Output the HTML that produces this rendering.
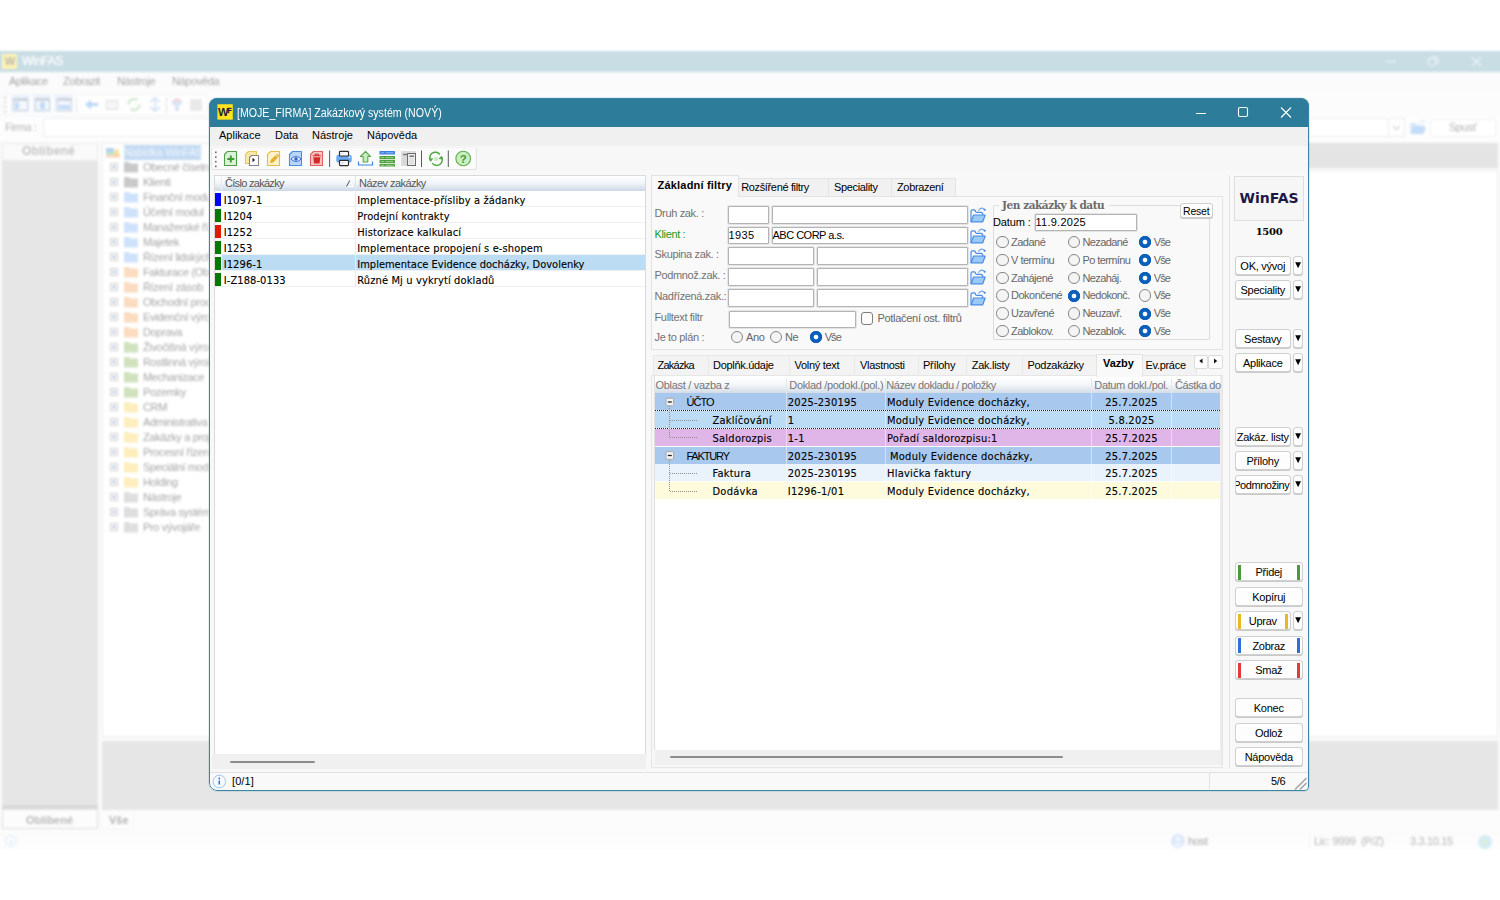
<!DOCTYPE html><html lang="cs"><head><meta charset="utf-8"><title>WinFAS</title><style>
*{box-sizing:border-box;margin:0;padding:0}
html,body{width:1500px;height:900px;overflow:hidden;background:#fff}
body{position:relative;font-family:"Liberation Sans","DejaVu Sans",sans-serif;font-size:11px;color:#000}
div,span.t,span.g,span.b,svg{position:absolute}
span.t{white-space:nowrap;line-height:13px;letter-spacing:-0.35px}
span.g{white-space:nowrap;line-height:13px;font-family:"DejaVu Sans Condensed","DejaVu Sans",sans-serif;font-size:11px;-webkit-text-stroke:.12px #000}
span.b{white-space:nowrap;line-height:13px;color:#a6a6a6;letter-spacing:-0.35px}
.inp{background:#fff;border:1px solid #b4b4b4;border-radius:1px;box-shadow:0 0 0 1px #e4e4e4}
.btn{background:#fdfdfd;border:1px solid #d0d0d0;border-radius:3px;text-align:center;line-height:16px;letter-spacing:-0.25px;box-shadow:0 1px 0 #c9c9c9}
.tab{background:#f0f0f0;border:1px solid #e3e3e3;border-bottom:none}
.rad{border:1px solid #8a8a8a;border-radius:50%;background:#f6f6f6;width:12px;height:12px}
.radon{border:4px solid #0f64c0;border-radius:50%;background:#fff;width:12px;height:12px}
</style></head><body>
<div id="bg" style="left:-30px;top:0;width:1560px;height:900px;filter:blur(.9px)"><div style="left:30px;top:0;width:1500px;height:900px">
<div style="left:-20px;top:51px;width:1540px;height:21px;background:#c9dde5"></div>
<div style="left:2px;top:54px;width:15px;height:15px;background:#fdf3b4;font-weight:bold;font-size:11px;color:#b9b7b0;text-align:center;line-height:15px;letter-spacing:-1px">W</div>
<span class="b" style="left:22px;top:55px;color:#fff;font-size:12px;letter-spacing:-.4px;text-shadow:0 0 .6px #fff">WinFAS</span>
<svg style="left:1380px;top:51px" width="120" height="21" viewBox="0 0 120 21"><g stroke="#eef5f8" stroke-width="1.2" fill="none"><path d="M6 10.5h10"/><rect x="48.5" y="7.5" width="7" height="7" rx="1.5"/><path d="M50.5 6h5.5a1.5 1.5 0 0 1 1.5 1.5V13"/><path d="M92 6l9 9M101 6l-9 9"/></g></svg>
<div style="left:-20px;top:72px;width:1540px;height:21px;background:#fbfbfb"></div>
<span class="b" style="left:9px;top:75px;">Aplikace</span>
<span class="b" style="left:63px;top:75px;">Zobrazit</span>
<span class="b" style="left:117px;top:75px;">Nástroje</span>
<span class="b" style="left:172px;top:75px;">Nápověda</span>
<div style="left:-20px;top:93px;width:1540px;height:24px;background:#fcfcfc"></div>
<div style="left:2px;top:94px;width:206px;height:22px;background:#fefefe;border:1px solid #f3f3f3;border-radius:3px"></div>
<svg style="left:0;top:93px" width="210" height="24" viewBox="0 0 210 24"><g fill="#b9b9b9"><circle cx="5.5" cy="4.500" r=".9"/><circle cx="5.5" cy="9.200" r=".9"/><circle cx="5.5" cy="13.900" r=".9"/><circle cx="5.500" cy="18.600" r=".9"/></g><g fill="#edf4fd"><rect x="10.500" y="1.500" width="19" height="18"/><rect x="32.500" y="1.500" width="18.500" height="18"/><rect x="54" y="1.500" width="18.500" height="18"/></g><g fill="#f4f8fd" stroke="#c6cfde" stroke-width="1"><rect x="13.5" y="5.5" width="14" height="12"/><rect x="35.5" y="5.5" width="14" height="12"/><rect x="57.500" y="5.500" width="14" height="12"/></g><g fill="#c3dbf7"><rect x="15" y="9" width="4" height="7"/><rect x="40" y="9" width="5" height="7"/><rect x="59" y="12" width="11" height="4"/></g><g fill="#cdd3de"><rect x="13" y="5" width="15" height="3"/><rect x="35" y="5" width="15" height="3"/><rect x="57" y="5" width="15" height="3"/></g><path d="M76.500 4v16" stroke="#e3e3e3"/><path d="M85 11.500l6-5v3.500h7v3h-7v3.500z" fill="#bcd7f5"/><rect x="106.500" y="7.500" width="11" height="9" fill="#f6f6f6" stroke="#e0e0e0"/><circle cx="134" cy="11.500" r="5.500" fill="none" stroke="#cfe6cb" stroke-width="2" stroke-dasharray="12 5"/><path d="M155 5v13M150 9l5-4 5 4M150 14l5 4 5-4" stroke="#cfe0f6" stroke-width="1.6" fill="none"/><path d="M166.500 4v16" stroke="#e3e3e3"/><path d="M172 8h10v4h-10zM175 12v6h4v-6" fill="#d9e4f4"/><path d="M172 8l5-3 5 3" fill="#f3cfd0"/><rect x="190" y="6" width="12" height="12" fill="#e9e9e9"/></svg>
<div style="left:-20px;top:117px;width:1540px;height:25px;background:#fdfdfd"></div>
<span class="b" style="left:5px;top:121px;color:#b6b6b6">Firma :</span>
<div style="left:43px;top:118px;width:1362px;height:19px;background:#fff;border:1px solid #ececec"></div>
<div style="left:1388px;top:118px;width:17px;height:19px;border:1px solid #ececec"></div>
<svg style="left:1388px;top:118px" width="17" height="19"><path d="M5 8l3.500 3.500L12 8" stroke="#d5d5d5" stroke-width="1.2" fill="none"/></svg>
<svg style="left:1409px;top:119px" width="18" height="18" viewBox="0 0 18 18"><path d="M1.500 4h5l1.500 2h7v9h-13.500z" fill="#d3e5fa"/><path d="M1.500 15l2.500-7h13l-2.500 7z" fill="#c2dcf9"/><path d="M10 3.500c2-2 4-2 6 0" stroke="#c9dff8" fill="none"/></svg>
<div style="left:1430px;top:119px;width:66px;height:18px;background:#fff;border:1px solid #f0f0f0;border-radius:3px"></div>
<span class="b" style="left:1449px;top:121px;color:#b4b4b4">Spusť</span>
<div style="left:-20px;top:141px;width:1540px;height:669px;background:#fafafa"></div>
<div style="left:2px;top:143px;width:96px;height:667px;background:#e6e6e6"></div>
<div style="left:2px;top:805px;width:96px;height:4px;background:#d9d9d9"></div>
<div style="left:2px;top:143px;width:96px;height:18px;background:#fafafa;border:1px solid #ebebeb"></div>
<span class="b" style="left:22px;top:145px;font-weight:bold;font-size:12px;color:#c4c4c4;letter-spacing:.2px">Oblíbené</span>
<div style="left:102px;top:143px;width:1396px;height:25px;background:#e4e4e4"></div>
<div style="left:102px;top:143px;width:108px;height:594px;background:#fff;border:1px solid #ededed;border-right:none"></div>
<div style="left:1300px;top:170px;width:198px;height:567px;background:#fff;border:1px solid #ececec"></div>
<div style="left:102px;top:741px;width:1396px;height:69px;background:#e6e6e6"></div>
<div style="left:124px;top:145px;width:77px;height:15px;background:#c3daf3"></div>
<span class="b" style="left:124px;top:146px;color:#eef5fc">Nabídka WinFAS</span>
<svg style="left:104px;top:145px" width="18" height="15"><rect x="2" y="3" width="8" height="4" fill="#b4d2ec"/><rect x="2" y="7" width="9" height="3" fill="#bfe3cc"/><path d="M9 11l4-9 3 9z" fill="#f8dd92"/><path d="M2 10.500h14v2H2z" fill="#f5cdb0"/></svg>
<svg style="left:104px;top:160px" width="40" height="380"><rect x="6.500" y="3.5" width="7" height="7" fill="#fff" stroke="#cdcdcd"/><path d="M8 7h4M10 5v4" stroke="#a9b6d0"/><path d="M20 2h5l1 1.500h8v9h-14z" fill="#c9c9c9"/><rect x="6.500" y="18.5" width="7" height="7" fill="#fff" stroke="#cdcdcd"/><path d="M8 22h4M10 20v4" stroke="#a9b6d0"/><path d="M20 17h5l1 1.500h8v9h-14z" fill="#c9c9c9"/><rect x="6.500" y="33.5" width="7" height="7" fill="#fff" stroke="#cdcdcd"/><path d="M8 37h4M10 35v4" stroke="#a9b6d0"/><path d="M20 32h5l1 1.500h8v9h-14z" fill="#cfe2fb"/><rect x="6.500" y="48.5" width="7" height="7" fill="#fff" stroke="#cdcdcd"/><path d="M8 52h4M10 50v4" stroke="#a9b6d0"/><path d="M20 47h5l1 1.500h8v9h-14z" fill="#cfe2fb"/><rect x="6.500" y="63.5" width="7" height="7" fill="#fff" stroke="#cdcdcd"/><path d="M8 67h4M10 65v4" stroke="#a9b6d0"/><path d="M20 62h5l1 1.500h8v9h-14z" fill="#cfe2fb"/><rect x="6.500" y="78.5" width="7" height="7" fill="#fff" stroke="#cdcdcd"/><path d="M8 82h4M10 80v4" stroke="#a9b6d0"/><path d="M20 77h5l1 1.500h8v9h-14z" fill="#cfe2fb"/><rect x="6.500" y="93.5" width="7" height="7" fill="#fff" stroke="#cdcdcd"/><path d="M8 97h4M10 95v4" stroke="#a9b6d0"/><path d="M20 92h5l1 1.500h8v9h-14z" fill="#cfe2fb"/><rect x="6.500" y="108.5" width="7" height="7" fill="#fff" stroke="#cdcdcd"/><path d="M8 112h4M10 110v4" stroke="#a9b6d0"/><path d="M20 107h5l1 1.500h8v9h-14z" fill="#fbdcc0"/><rect x="6.500" y="123.5" width="7" height="7" fill="#fff" stroke="#cdcdcd"/><path d="M8 127h4M10 125v4" stroke="#a9b6d0"/><path d="M20 122h5l1 1.500h8v9h-14z" fill="#fbdcc0"/><rect x="6.500" y="138.5" width="7" height="7" fill="#fff" stroke="#cdcdcd"/><path d="M8 142h4M10 140v4" stroke="#a9b6d0"/><path d="M20 137h5l1 1.500h8v9h-14z" fill="#fbdcc0"/><rect x="6.500" y="153.5" width="7" height="7" fill="#fff" stroke="#cdcdcd"/><path d="M8 157h4M10 155v4" stroke="#a9b6d0"/><path d="M20 152h5l1 1.500h8v9h-14z" fill="#fbdcc0"/><rect x="6.500" y="168.5" width="7" height="7" fill="#fff" stroke="#cdcdcd"/><path d="M8 172h4M10 170v4" stroke="#a9b6d0"/><path d="M20 167h5l1 1.500h8v9h-14z" fill="#fbdcc0"/><rect x="6.500" y="183.5" width="7" height="7" fill="#fff" stroke="#cdcdcd"/><path d="M8 187h4M10 185v4" stroke="#a9b6d0"/><path d="M20 182h5l1 1.500h8v9h-14z" fill="#cfe2bd"/><rect x="6.500" y="198.5" width="7" height="7" fill="#fff" stroke="#cdcdcd"/><path d="M8 202h4M10 200v4" stroke="#a9b6d0"/><path d="M20 197h5l1 1.500h8v9h-14z" fill="#cfe2bd"/><rect x="6.500" y="213.5" width="7" height="7" fill="#fff" stroke="#cdcdcd"/><path d="M8 217h4M10 215v4" stroke="#a9b6d0"/><path d="M20 212h5l1 1.500h8v9h-14z" fill="#cfe2bd"/><rect x="6.500" y="228.5" width="7" height="7" fill="#fff" stroke="#cdcdcd"/><path d="M8 232h4M10 230v4" stroke="#a9b6d0"/><path d="M20 227h5l1 1.500h8v9h-14z" fill="#cfe2bd"/><rect x="6.500" y="243.5" width="7" height="7" fill="#fff" stroke="#cdcdcd"/><path d="M8 247h4M10 245v4" stroke="#a9b6d0"/><path d="M20 242h5l1 1.500h8v9h-14z" fill="#fdeebc"/><rect x="6.500" y="258.5" width="7" height="7" fill="#fff" stroke="#cdcdcd"/><path d="M8 262h4M10 260v4" stroke="#a9b6d0"/><path d="M20 257h5l1 1.500h8v9h-14z" fill="#fdeebc"/><rect x="6.500" y="273.5" width="7" height="7" fill="#fff" stroke="#cdcdcd"/><path d="M8 277h4M10 275v4" stroke="#a9b6d0"/><path d="M20 272h5l1 1.500h8v9h-14z" fill="#fdeebc"/><rect x="6.500" y="288.5" width="7" height="7" fill="#fff" stroke="#cdcdcd"/><path d="M8 292h4M10 290v4" stroke="#a9b6d0"/><path d="M20 287h5l1 1.500h8v9h-14z" fill="#fdeebc"/><rect x="6.500" y="303.5" width="7" height="7" fill="#fff" stroke="#cdcdcd"/><path d="M8 307h4M10 305v4" stroke="#a9b6d0"/><path d="M20 302h5l1 1.500h8v9h-14z" fill="#fdeebc"/><rect x="6.500" y="318.5" width="7" height="7" fill="#fff" stroke="#cdcdcd"/><path d="M8 322h4M10 320v4" stroke="#a9b6d0"/><path d="M20 317h5l1 1.500h8v9h-14z" fill="#fdeebc"/><rect x="6.500" y="333.5" width="7" height="7" fill="#fff" stroke="#cdcdcd"/><path d="M8 337h4M10 335v4" stroke="#a9b6d0"/><path d="M20 332h5l1 1.500h8v9h-14z" fill="#dedede"/><rect x="6.500" y="348.5" width="7" height="7" fill="#fff" stroke="#cdcdcd"/><path d="M8 352h4M10 350v4" stroke="#a9b6d0"/><path d="M20 347h5l1 1.500h8v9h-14z" fill="#dedede"/><rect x="6.500" y="363.5" width="7" height="7" fill="#fff" stroke="#cdcdcd"/><path d="M8 367h4M10 365v4" stroke="#a9b6d0"/><path d="M20 362h5l1 1.500h8v9h-14z" fill="#dedede"/></svg>
<div style="left:143px;top:160px;width:66px;height:380px;overflow:hidden">
<span class="b" style="left:0px;top:1px;">Obecné číselníky</span>
<span class="b" style="left:0px;top:16px;">Klienti</span>
<span class="b" style="left:0px;top:31px;">Finanční moduly</span>
<span class="b" style="left:0px;top:46px;">Účetní modul</span>
<span class="b" style="left:0px;top:61px;">Manažerské řízení</span>
<span class="b" style="left:0px;top:76px;">Majetek</span>
<span class="b" style="left:0px;top:91px;">Řízení lidských zdrojů</span>
<span class="b" style="left:0px;top:106px;">Fakturace (Obchod)</span>
<span class="b" style="left:0px;top:121px;">Řízení zásob</span>
<span class="b" style="left:0px;top:136px;">Obchodní procesy</span>
<span class="b" style="left:0px;top:151px;">Evidenční výroba</span>
<span class="b" style="left:0px;top:166px;">Doprava</span>
<span class="b" style="left:0px;top:181px;">Živočišná výroba</span>
<span class="b" style="left:0px;top:196px;">Rostlinná výroba</span>
<span class="b" style="left:0px;top:211px;">Mechanizace</span>
<span class="b" style="left:0px;top:226px;">Pozemky</span>
<span class="b" style="left:0px;top:241px;">CRM</span>
<span class="b" style="left:0px;top:256px;">Administrativa</span>
<span class="b" style="left:0px;top:271px;">Zakázky a projekty</span>
<span class="b" style="left:0px;top:286px;">Procesní řízení</span>
<span class="b" style="left:0px;top:301px;">Speciální moduly</span>
<span class="b" style="left:0px;top:316px;">Holding</span>
<span class="b" style="left:0px;top:331px;">Nástroje</span>
<span class="b" style="left:0px;top:346px;">Správa systému</span>
<span class="b" style="left:0px;top:361px;">Pro vývojáře</span>
</div>
<div style="left:-20px;top:810px;width:1540px;height:22px;background:#fcfcfc"></div>
<div style="left:2px;top:810px;width:96px;height:19px;background:#fcfcfc;border:1px solid #dcdcdc;border-top:none"></div>
<span class="b" style="left:26px;top:814px;font-weight:bold;color:#b8b8b8;letter-spacing:0">Oblíbené</span>
<span class="b" style="left:109px;top:814px;font-weight:bold;color:#b2b2b2;letter-spacing:0">Vše</span>
<div style="left:100px;top:811px;width:34px;height:19px;border:1px solid #f4f4f4;border-top:none"></div>
<div style="left:-20px;top:832px;width:1540px;height:18px;background:linear-gradient(#fbfbfb,#fefefe)"></div>
<svg style="left:4px;top:834px" width="14" height="14"><circle cx="7" cy="7" r="5.500" fill="#fafcff" stroke="#dde9f8"/><path d="M7 6v4" stroke="#cfdff5" stroke-width="1.300"/></svg>
<svg style="left:1170px;top:833px" width="16" height="16"><circle cx="8" cy="8" r="7" fill="#dbe9fb"/><circle cx="8" cy="6" r="2.500" fill="#f0f6fe"/><path d="M3.500 13c1-4 8-4 9 0z" fill="#f0f6fe"/></svg>
<span class="b" style="left:1188px;top:835px;color:#a8a8a8">host</span>
<span class="b" style="left:1314px;top:835px;color:#b4b4b4">Lic: 9999&nbsp; (P/Z)</span>
<span class="b" style="left:1410px;top:835px;color:#b4b4b4">3.3.10.15</span>
<div style="left:1309px;top:834px;width:1px;height:14px;background:#f2f2f2"></div>
<svg style="left:1476px;top:833px" width="18" height="18"><circle cx="9" cy="9" r="7" fill="#d4ecf4"/><circle cx="9" cy="9" r="3" fill="#d9f0dd"/></svg>
</div></div>
<div id="win" style="left:209px;top:98px;width:1100px;height:693px;border-radius:8px 8px 4px 8px;overflow:hidden;background:#f8f8f8;box-shadow:0 0 0 1px rgba(43,122,155,.12)">
<div id="wi" style="left:-209px;top:-98px;width:1500px;height:900px">
<div style="left:209px;top:98px;width:1100px;height:693px;border:1px solid #3a84a4;border-radius:8px 8px 4px 8px;z-index:5;pointer-events:none"></div>
<div style="left:209px;top:98px;width:1100px;height:29px;background:#2c7c9a"></div>
<svg style="left:217px;top:104px" width="16" height="16" viewBox="0 0 16 16"><rect x=".400" y=".250" width="15.400" height="15.400" fill="#ffe41a"/><text x="1" y="11.700" font-family="Liberation Sans,sans-serif" font-weight="bold" font-size="10.500" fill="#231a45" textLength="10.500" lengthAdjust="spacingAndGlyphs">W</text><text x="10.600" y="9.200" font-family="Liberation Sans,sans-serif" font-weight="bold" font-size="6.500" fill="#231a45" stroke="#231a45" stroke-width=".35">F</text></svg>
<span class="t" style="left:237px;top:105px;color:#fff;font-size:12px;line-height:16px;letter-spacing:0;transform:scaleX(.885);transform-origin:0 0">[MOJE_FIRMA] Zakázkový systém (NOVÝ)</span>
<svg style="left:1180px;top:98px" width="129" height="29" viewBox="0 0 129 29"><g stroke="#fff" stroke-width="1.100" fill="none"><path d="M16 15.500h10"/><rect x="58.500" y="9.500" width="9" height="9" rx="1.500"/><path d="M101 9.500l10 10M111 9.500l-10 10"/></g></svg>
<div style="left:210px;top:127px;width:1098px;height:19px;background:#f0f0f0"></div>
<span class="t" style="left:219px;top:129px;letter-spacing:0">Aplikace</span>
<span class="t" style="left:275px;top:129px;letter-spacing:0">Data</span>
<span class="t" style="left:312px;top:129px;letter-spacing:0">Nástroje</span>
<span class="t" style="left:367px;top:129px;letter-spacing:0">Nápověda</span>
<div style="left:210px;top:146px;width:1098px;height:25px;background:#f7f7f7"></div>
<div style="left:211px;top:147px;width:266px;height:23px;background:#fbfbfb;border:1px solid #e2e2e2;border-top-color:#f2f2f2;border-left-color:#e9e9e9;border-radius:3px"></div>
<svg style="left:210px;top:147px" width="270" height="23" viewBox="0 0 270 23"><g fill="#6b6b6b"><rect x="5" y="4.500" width="1.600" height="1.600"/><rect x="5" y="9.200" width="1.600" height="1.600"/><rect x="5" y="13.900" width="1.600" height="1.600"/><rect x="5" y="18.600" width="1.600" height="1.600"/></g><path d="M17.5 4.500H26.5V18.500H14.5V7.500z" fill="#dcf2d8" stroke="#4f9f46" stroke-width="1.100" stroke-linejoin="round"/><path d="M20.800 8.500v7M17.300 12h7" stroke="#3c9a33" stroke-width="1.900"/><path d="M38.500 4.500H46.500V16.500H35.500V7.500z" fill="#fbe8a6" stroke="#eac75c" stroke-width="1.100" stroke-linejoin="round"/><path d="M41.500 8.500H48.500V18.500H39.500V10.500z" fill="#fff" stroke="#858585" stroke-width="1.100" stroke-linejoin="round"/><path d="M42.500 10.800l2.600 2.200-2.600 2.200z" fill="#222"/><path d="M60.5 4.500H69.5V18.500H57.5V7.500z" fill="#fdf2c9" stroke="#e8bd42" stroke-width="1.100" stroke-linejoin="round"/><path d="M60 16l.7-3 4.800-4.800 2.400 2.400-4.800 4.800z" fill="#e6ae2b"/><path d="M66.200 7.500l.9-.9 2.400 2.400-.9.900z" fill="#e6ae2b"/><path d="M82.5 4.500H91.5V18.500H79.5V7.500z" fill="#b7d6f8" stroke="#4b8ce2" stroke-width="1.100" stroke-linejoin="round"/><path d="M81 12c2.500-3.200 7.500-3.200 10 0-2.500 3.200-7.500 3.200-10 0z" fill="#dbeafc" stroke="#2a62c9" stroke-width=".9"/><circle cx="86" cy="12" r="1.700" fill="#2a62c9"/><path d="M103.5 4.500H112.5V18.500H100.5V7.500z" fill="#f7c6c6" stroke="#e26060" stroke-width="1.100" stroke-linejoin="round"/><path d="M103.300 10.200h7l-.7 6.300h-5.600z" fill="#d62a2a"/><path d="M102.800 8.800h8M105.300 8.300v-1h3v1" stroke="#d62a2a" stroke-width="1.100" fill="none"/><path d="M119.600 3.500v16.500" stroke="#5b5b5b" stroke-width="1"/><rect x="126.300" y="7.800" width="15.400" height="7.800" rx="2.200" fill="#69a8f3"/><rect x="129.500" y="4.300" width="9" height="4.700" rx=".8" fill="#fff" stroke="#2e2e2e" stroke-width="1.200"/><rect x="129.500" y="13.300" width="9" height="5.300" rx=".8" fill="#fff" stroke="#2e2e2e" stroke-width="1.200"/><path d="M131 6.200h3M131 15.300h4M131 16.800h2.500" stroke="#bcd8fa" stroke-width=".8"/><circle cx="139.300" cy="10.300" r=".7" fill="#fff"/><path d="M155.500 4.300l5 5.200h-2.700v5.500h-4.600v-5.500h-2.700z" fill="#c9ebc2" stroke="#58a648" stroke-width="1.100" stroke-linejoin="round"/><path d="M148.500 14.500v3.500h14v-3.500" fill="none" stroke="#3f83e3" stroke-width="1.200"/><rect x="169.500" y="4" width="15.500" height="3.600" rx=".6" fill="#3d80e2"/><rect x="169.500" y="9" width="15.500" height="3.2" rx=".5" fill="#4fa040"/><rect x="169.500" y="13" width="15.500" height="3.2" rx=".5" fill="#4fa040"/><rect x="169.500" y="17" width="15.500" height="2.6" rx=".5" fill="#4fa040"/><path d="M171 5.800h3M175.500 5.800h8" stroke="#a8c8f5" stroke-width=".8"/><path d="M171 10.600h3M175.500 10.600h8M171 14.600h3M175.500 14.600h8M171 18.300h3M175.500 18.300h8" stroke="#a9d79f" stroke-width=".8"/><rect x="191" y="4" width="15" height="15" fill="#dedede"/><rect x="197.500" y="6.500" width="8" height="12" fill="#ececec" stroke="#6a6a6a" stroke-width="1"/><path d="M193 7.500h5M199.500 9.200h4.500" stroke="#777" stroke-width="1.400"/><path d="M192.500 10h4M192.500 12h4M192.500 14h4M192.500 16h4M199.500 12h4M199.500 14h4M199.500 16h4" stroke="#cfcfcf" stroke-width=".8"/><path d="M211.500 3.500v16.500" stroke="#5b5b5b" stroke-width="1"/><g fill="none" stroke="#58a648" stroke-width="1.500"><path d="M220.800 13.800a5.400 5.400 0 0 1 9-6.300"/><path d="M231.300 9.800a5.400 5.400 0 0 1-9 6.300"/></g><path d="M218.500 11.200l2.200 3.600 2.800-3.200z" fill="#58a648"/><path d="M233.600 12.400l-2.200-3.600-2.800 3.200z" fill="#58a648"/><rect x="224.300" y="10.200" width="3.600" height="3.600" fill="#c4ecbc"/><path d="M238.300 3.500v16.500" stroke="#5b5b5b" stroke-width="1"/><circle cx="253.200" cy="11.500" r="7.300" fill="#c8eec1" stroke="#5fae50" stroke-width="1.100"/><text x="253.200" y="15.600" text-anchor="middle" font-family="Liberation Sans,sans-serif" font-weight="bold" font-size="11.500" fill="#4a9a3c">?</text></svg>
<div style="left:214px;top:175px;width:432px;height:579px;background:#fff;border:1px solid #dadada;border-bottom:none"></div>
<div style="left:215px;top:176px;width:430px;height:15px;background:linear-gradient(#ffffff 0%,#f3f6f9 45%,#cdd9e6 100%)"></div>
<div style="left:221px;top:176px;width:1px;height:15px;background:#e9edf2"></div>
<div style="left:355px;top:176px;width:1px;height:15px;background:#dfe5ec"></div>
<span class="t" style="left:225px;top:177px;color:#555;letter-spacing:-.7px">Číslo zakázky</span>
<span class="t" style="left:359px;top:177px;color:#555;letter-spacing:-.55px">Název zakázky</span>
<svg style="left:344px;top:178px" width="10" height="10"><path d="M2.500 8.500L6 2" stroke="#555" stroke-width="1"/><path d="M6 2l3 6.500h-6" stroke="#fff" stroke-width="1" fill="none"/></svg>
<div style="left:215px;top:206px;width:430px;height:1px;background:#f0f0f0"></div>
<div style="left:215px;top:193px;width:6px;height:13px;background:#0000ff"></div>
<span class="g" style="left:223.7px;top:193.8px;letter-spacing:.1px">I1097-1</span>
<span class="g" style="left:357.3px;top:193.8px;letter-spacing:.13px">Implementace-přísliby a žádanky</span>
<div style="left:215px;top:222px;width:430px;height:1px;background:#f0f0f0"></div>
<div style="left:215px;top:209px;width:6px;height:13px;background:#007a00"></div>
<span class="g" style="left:223.7px;top:209.8px;letter-spacing:.1px">I1204</span>
<span class="g" style="left:357.3px;top:209.8px;letter-spacing:.13px">Prodejní kontrakty</span>
<div style="left:215px;top:238px;width:430px;height:1px;background:#f0f0f0"></div>
<div style="left:215px;top:225px;width:6px;height:13px;background:#e01b00"></div>
<span class="g" style="left:223.7px;top:225.8px;letter-spacing:.1px">I1252</span>
<span class="g" style="left:357.3px;top:225.8px;letter-spacing:.13px">Historizace kalkulací</span>
<div style="left:215px;top:254px;width:430px;height:1px;background:#f0f0f0"></div>
<div style="left:215px;top:241px;width:6px;height:13px;background:#007a00"></div>
<span class="g" style="left:223.7px;top:241.8px;letter-spacing:.1px">I1253</span>
<span class="g" style="left:357.3px;top:241.8px;letter-spacing:.13px">Implementace propojení s e-shopem</span>
<div style="left:222px;top:255px;width:423px;height:16px;background:#bcdcf4"></div>
<div style="left:215px;top:270px;width:430px;height:1px;background:#f0f0f0"></div>
<div style="left:215px;top:257px;width:6px;height:13px;background:#007a00"></div>
<span class="g" style="left:223.7px;top:257.8px;letter-spacing:.1px">I1296-1</span>
<span class="g" style="left:357.3px;top:257.8px;letter-spacing:0">Implementace Evidence docházky, Dovolenky</span>
<div style="left:215px;top:286px;width:430px;height:1px;background:#f0f0f0"></div>
<div style="left:215px;top:273px;width:6px;height:13px;background:#007a00"></div>
<span class="g" style="left:223.7px;top:273.8px;letter-spacing:.1px">I-Z188-0133</span>
<span class="g" style="left:357.3px;top:273.8px;letter-spacing:.13px">Různé Mj u vykrytí dokladů</span>
<div style="left:355px;top:191px;width:1px;height:96px;background:#ececec"></div>
<div style="left:212px;top:753.5px;width:434px;height:15.5px;background:#f0f0f0"></div>
<div style="left:230px;top:761px;width:85px;height:2px;background:#8c8c8c;border-radius:1px"></div>
<div style="left:210px;top:772px;width:1098px;height:1px;background:#e2e2e2"></div>
<div style="left:210px;top:773px;width:1098px;height:17px;background:#f9f9f9"></div>
<svg style="left:211.700px;top:774px" width="15" height="15"><circle cx="7.300" cy="7.500" r="6.300" fill="#f7fbff" stroke="#9cc4f0" stroke-width="1"/><path d="M7.300 6.500v4" stroke="#2f6fd6" stroke-width="1.500"/><circle cx="7.300" cy="4.500" r=".9" fill="#2f6fd6"/></svg>
<span class="t" style="left:232px;top:775px;letter-spacing:.1px">[0/1]</span>
<div style="left:1209px;top:773px;width:1px;height:16px;background:#e2e2e2"></div>
<span class="t" style="left:1271px;top:775px;">5/6</span>
<svg style="left:1294px;top:777px" width="14" height="14"><path d="M1 12.500L12.500 1M6 12.500l6.500-6.500" stroke="#a3a3a3" stroke-width="1.500"/></svg>
<div style="left:738px;top:178px;width:91px;height:19px;background:#f1f1f1;border:1px solid #e4e4e4;border-bottom:none"></div>
<span class="t" style="left:741.2px;top:181px;">Rozšířené filtry</span>
<div style="left:828px;top:178px;width:64px;height:19px;background:#f1f1f1;border:1px solid #e4e4e4;border-bottom:none"></div>
<span class="t" style="left:834px;top:181px;">Speciality</span>
<div style="left:891px;top:178px;width:65px;height:19px;background:#f1f1f1;border:1px solid #e4e4e4;border-bottom:none"></div>
<span class="t" style="left:897px;top:181px;">Zobrazení</span>
<div style="left:651px;top:196px;width:572px;height:154px;background:#f9f9f9;border:1px solid #e3e3e3"></div>
<div style="left:651px;top:175px;width:88px;height:22px;background:#f9f9f9;border:1px solid #e3e3e3;border-bottom:none"></div>
<span class="t" style="left:657.5px;top:179px;font-weight:bold;letter-spacing:.2px">Základní filtry</span>
<span class="t" style="left:654.5px;top:207px;color:#727272">Druh zak. :</span>
<span class="t" style="left:654.5px;top:227.5px;color:#1a9a1a">Klient :</span>
<span class="t" style="left:654.5px;top:248.3px;color:#727272">Skupina zak. :</span>
<span class="t" style="left:654.5px;top:269px;color:#727272">Podmnož.zak. :</span>
<span class="t" style="left:654.5px;top:290px;color:#727272">Nadřízená.zak.:</span>
<span class="t" style="left:654.5px;top:310.5px;color:#727272">Fulltext filtr</span>
<span class="t" style="left:654.5px;top:331px;color:#727272">Je to plán :</span>
<div class="inp" style="left:727.5px;top:206px;width:41px;height:17.5px;"></div>
<div class="inp" style="left:772px;top:206px;width:195.5px;height:17.5px;"></div>
<div class="inp" style="left:727.5px;top:226.6px;width:41px;height:17.5px;"></div>
<div class="inp" style="left:772px;top:226.6px;width:195.5px;height:17.5px;"></div>
<div class="inp" style="left:727.5px;top:247.3px;width:86.5px;height:17.5px;"></div>
<div class="inp" style="left:817px;top:247.3px;width:150.5px;height:17.5px;"></div>
<div class="inp" style="left:727.5px;top:268px;width:86.5px;height:17.5px;"></div>
<div class="inp" style="left:817px;top:268px;width:150.5px;height:17.5px;"></div>
<div class="inp" style="left:727.5px;top:289px;width:86.5px;height:17.5px;"></div>
<div class="inp" style="left:817px;top:289px;width:150.5px;height:17.5px;"></div>
<span class="t" style="left:728.5px;top:228.8px;letter-spacing:.4px">1935</span>
<span class="t" style="left:772.5px;top:228.8px;letter-spacing:-.5px">ABC CORP a.s.</span>
<div class="inp" style="left:728.5px;top:310.5px;width:127px;height:17.5px;"></div>
<svg style="left:969.5px;top:207.1px" width="17" height="17" viewBox="0 0 17 17"><path d="M1 14.500V4.400Q1 2.900 2.500 2.900H4.200Q5 2.900 5.300 3.700L5.600 4.600Q5.800 5.300 6.600 5.300H11Q12.600 5.300 12.800 7.600" fill="none" stroke="#4a8ce2" stroke-width="1.200" stroke-linecap="round"/><path d="M3.600 8H15.200L12.700 14.800H1.100z" fill="#9bcaf9" stroke="#4a8ce2" stroke-width="1.200" stroke-linejoin="round"/><path d="M8.700 3.300Q11.500 -.600 14.500 2.500" fill="none" stroke="#6aa0ea" stroke-width="1.100" stroke-linecap="round"/><circle cx="14.700" cy="2.700" r="1.050" fill="#3f86e6"/></svg>
<svg style="left:969.5px;top:227.7px" width="17" height="17" viewBox="0 0 17 17"><path d="M1 14.500V4.400Q1 2.900 2.500 2.900H4.200Q5 2.900 5.300 3.700L5.600 4.600Q5.800 5.300 6.600 5.300H11Q12.600 5.300 12.800 7.600" fill="none" stroke="#4a8ce2" stroke-width="1.200" stroke-linecap="round"/><path d="M3.600 8H15.200L12.700 14.800H1.100z" fill="#9bcaf9" stroke="#4a8ce2" stroke-width="1.200" stroke-linejoin="round"/><path d="M8.700 3.300Q11.500 -.600 14.500 2.500" fill="none" stroke="#6aa0ea" stroke-width="1.100" stroke-linecap="round"/><circle cx="14.700" cy="2.700" r="1.050" fill="#3f86e6"/></svg>
<svg style="left:969.5px;top:248.4px" width="17" height="17" viewBox="0 0 17 17"><path d="M1 14.500V4.400Q1 2.900 2.500 2.900H4.200Q5 2.900 5.300 3.700L5.600 4.600Q5.800 5.300 6.600 5.300H11Q12.600 5.300 12.800 7.600" fill="none" stroke="#4a8ce2" stroke-width="1.200" stroke-linecap="round"/><path d="M3.600 8H15.200L12.700 14.800H1.100z" fill="#9bcaf9" stroke="#4a8ce2" stroke-width="1.200" stroke-linejoin="round"/><path d="M8.700 3.300Q11.500 -.600 14.500 2.500" fill="none" stroke="#6aa0ea" stroke-width="1.100" stroke-linecap="round"/><circle cx="14.700" cy="2.700" r="1.050" fill="#3f86e6"/></svg>
<svg style="left:969.5px;top:269.1px" width="17" height="17" viewBox="0 0 17 17"><path d="M1 14.500V4.400Q1 2.900 2.500 2.900H4.200Q5 2.900 5.300 3.700L5.600 4.600Q5.800 5.300 6.600 5.300H11Q12.600 5.300 12.800 7.600" fill="none" stroke="#4a8ce2" stroke-width="1.200" stroke-linecap="round"/><path d="M3.600 8H15.200L12.700 14.800H1.100z" fill="#9bcaf9" stroke="#4a8ce2" stroke-width="1.200" stroke-linejoin="round"/><path d="M8.700 3.300Q11.500 -.600 14.500 2.500" fill="none" stroke="#6aa0ea" stroke-width="1.100" stroke-linecap="round"/><circle cx="14.700" cy="2.700" r="1.050" fill="#3f86e6"/></svg>
<svg style="left:969.5px;top:290.1px" width="17" height="17" viewBox="0 0 17 17"><path d="M1 14.500V4.400Q1 2.900 2.500 2.900H4.200Q5 2.900 5.300 3.700L5.600 4.600Q5.800 5.300 6.600 5.300H11Q12.600 5.300 12.800 7.600" fill="none" stroke="#4a8ce2" stroke-width="1.200" stroke-linecap="round"/><path d="M3.600 8H15.200L12.700 14.800H1.100z" fill="#9bcaf9" stroke="#4a8ce2" stroke-width="1.200" stroke-linejoin="round"/><path d="M8.700 3.300Q11.500 -.600 14.500 2.500" fill="none" stroke="#6aa0ea" stroke-width="1.100" stroke-linecap="round"/><circle cx="14.700" cy="2.700" r="1.050" fill="#3f86e6"/></svg>
<div style="left:860.5px;top:312.3px;width:12.5px;height:12.5px;background:#fbfbfb;border:1px solid #7e7e7e;border-radius:3px"></div>
<span class="t" style="left:877.5px;top:311.8px;color:#666;letter-spacing:-.3px">Potlačení ost. filtrů</span>
<div style="left:730.8px;top:330.5px;width:12.4px;height:12.4px;border:1px solid #868686;border-radius:50%;background:#f4f4f4"></div>
<span class="t" style="left:746px;top:330.5px;color:#666">Ano</span>
<div style="left:770.0999999999999px;top:330.5px;width:12.4px;height:12.4px;border:1px solid #868686;border-radius:50%;background:#f4f4f4"></div>
<span class="t" style="left:785px;top:330.5px;color:#666">Ne</span>
<div style="left:809px;top:329.7px;width:14px;height:14px;background:radial-gradient(circle at 50% 50%,#fff 0,#fff 1.900px,#0c5fba 2.700px,#0c5fba 5.800px,rgba(12,95,186,0) 6.500px)"></div>
<span class="t" style="left:824.7px;top:330.5px;color:#666;letter-spacing:-.9px">Vše</span>
<div style="left:993px;top:204.8px;width:217px;height:135.7px;border:1px solid #dcdcdc;border-radius:1px"></div>
<div style="left:999px;top:199px;width:110px;height:13px;background:#f9f9f9"></div>
<span class="t" style="left:1002px;top:198.5px;font-family:&quot;DejaVu Serif&quot;,&quot;Liberation Serif&quot;,serif;font-weight:bold;font-size:10.500px;color:#6b6b6b;letter-spacing:-.45px">Jen zakázky k datu</span>
<span class="t" style="left:993px;top:215.5px;letter-spacing:-.1px">Datum :</span>
<div class="inp" style="left:1034.5px;top:213.5px;width:102.5px;height:17px;"></div>
<span class="t" style="left:1035.5px;top:215.5px;letter-spacing:.25px">11.9.2025</span>
<div class="btn" style="left:1180px;top:203.3px;width:32.5px;height:14.5px;font-size:10.500px;line-height:14px;border-radius:3px;letter-spacing:-.2px">Reset</div>
<div style="left:996.3px;top:235.8px;width:12.4px;height:12.4px;border:1px solid #868686;border-radius:50%;background:#f4f4f4"></div>
<span class="t" style="left:1011px;top:235.7px;color:#666;letter-spacing:-.5px">Zadané</span>
<div style="left:1067.6px;top:235.8px;width:12.4px;height:12.4px;border:1px solid #868686;border-radius:50%;background:#f4f4f4"></div>
<span class="t" style="left:1082.5px;top:235.7px;color:#666;letter-spacing:-.6px">Nezadané</span>
<div style="left:1138px;top:235px;width:14px;height:14px;background:radial-gradient(circle at 50% 50%,#fff 0,#fff 1.900px,#0c5fba 2.700px,#0c5fba 5.800px,rgba(12,95,186,0) 6.500px)"></div>
<span class="t" style="left:1153.8px;top:235.7px;color:#666;letter-spacing:-.9px">Vše</span>
<div style="left:996.3px;top:253.8px;width:12.4px;height:12.4px;border:1px solid #868686;border-radius:50%;background:#f4f4f4"></div>
<span class="t" style="left:1011px;top:253.7px;color:#666;letter-spacing:-.5px">V termínu</span>
<div style="left:1067.6px;top:253.8px;width:12.4px;height:12.4px;border:1px solid #868686;border-radius:50%;background:#f4f4f4"></div>
<span class="t" style="left:1082.5px;top:253.7px;color:#666;letter-spacing:-.6px">Po termínu</span>
<div style="left:1138px;top:253px;width:14px;height:14px;background:radial-gradient(circle at 50% 50%,#fff 0,#fff 1.900px,#0c5fba 2.700px,#0c5fba 5.800px,rgba(12,95,186,0) 6.500px)"></div>
<span class="t" style="left:1153.8px;top:253.7px;color:#666;letter-spacing:-.9px">Vše</span>
<div style="left:996.3px;top:271.6px;width:12.4px;height:12.4px;border:1px solid #868686;border-radius:50%;background:#f4f4f4"></div>
<span class="t" style="left:1011px;top:271.5px;color:#666;letter-spacing:-.5px">Zahájené</span>
<div style="left:1067.6px;top:271.6px;width:12.4px;height:12.4px;border:1px solid #868686;border-radius:50%;background:#f4f4f4"></div>
<span class="t" style="left:1082.5px;top:271.5px;color:#666;letter-spacing:-.6px">Nezaháj.</span>
<div style="left:1138px;top:270.8px;width:14px;height:14px;background:radial-gradient(circle at 50% 50%,#fff 0,#fff 1.900px,#0c5fba 2.700px,#0c5fba 5.800px,rgba(12,95,186,0) 6.500px)"></div>
<span class="t" style="left:1153.8px;top:271.5px;color:#666;letter-spacing:-.9px">Vše</span>
<div style="left:996.3px;top:289.40000000000003px;width:12.4px;height:12.4px;border:1px solid #868686;border-radius:50%;background:#f4f4f4"></div>
<span class="t" style="left:1011px;top:289.3px;color:#666;letter-spacing:-.5px">Dokončené</span>
<div style="left:1066.8px;top:288.6px;width:14px;height:14px;background:radial-gradient(circle at 50% 50%,#fff 0,#fff 1.900px,#0c5fba 2.700px,#0c5fba 5.800px,rgba(12,95,186,0) 6.500px)"></div>
<span class="t" style="left:1082.5px;top:289.3px;color:#666;letter-spacing:-.6px">Nedokonč.</span>
<div style="left:1138.8px;top:289.40000000000003px;width:12.4px;height:12.4px;border:1px solid #868686;border-radius:50%;background:#f4f4f4"></div>
<span class="t" style="left:1153.8px;top:289.3px;color:#666;letter-spacing:-.9px">Vše</span>
<div style="left:996.3px;top:307.3px;width:12.4px;height:12.4px;border:1px solid #868686;border-radius:50%;background:#f4f4f4"></div>
<span class="t" style="left:1011px;top:307.2px;color:#666;letter-spacing:-.5px">Uzavřené</span>
<div style="left:1067.6px;top:307.3px;width:12.4px;height:12.4px;border:1px solid #868686;border-radius:50%;background:#f4f4f4"></div>
<span class="t" style="left:1082.5px;top:307.2px;color:#666;letter-spacing:-.6px">Neuzavř.</span>
<div style="left:1138px;top:306.5px;width:14px;height:14px;background:radial-gradient(circle at 50% 50%,#fff 0,#fff 1.900px,#0c5fba 2.700px,#0c5fba 5.800px,rgba(12,95,186,0) 6.500px)"></div>
<span class="t" style="left:1153.8px;top:307.2px;color:#666;letter-spacing:-.9px">Vše</span>
<div style="left:996.3px;top:325.1px;width:12.4px;height:12.4px;border:1px solid #868686;border-radius:50%;background:#f4f4f4"></div>
<span class="t" style="left:1011px;top:325.0px;color:#666;letter-spacing:-.5px">Zablokov.</span>
<div style="left:1067.6px;top:325.1px;width:12.4px;height:12.4px;border:1px solid #868686;border-radius:50%;background:#f4f4f4"></div>
<span class="t" style="left:1082.5px;top:325.0px;color:#666;letter-spacing:-.6px">Nezablok.</span>
<div style="left:1138px;top:324.3px;width:14px;height:14px;background:radial-gradient(circle at 50% 50%,#fff 0,#fff 1.900px,#0c5fba 2.700px,#0c5fba 5.800px,rgba(12,95,186,0) 6.500px)"></div>
<span class="t" style="left:1153.8px;top:325.0px;color:#666;letter-spacing:-.9px">Vše</span>
<div style="left:653px;top:355.3px;width:56px;height:20.2px;background:#f3f3f3;border:1px solid #e8e8e8;border-bottom:none"></div>
<span class="t" style="left:657.5px;top:358.5px;letter-spacing:-.75px">Zakázka</span>
<div style="left:708px;top:355.3px;width:81.5px;height:20.2px;background:#f3f3f3;border:1px solid #e8e8e8;border-bottom:none"></div>
<span class="t" style="left:713px;top:358.5px;letter-spacing:-.3px">Doplňk.údaje</span>
<div style="left:788.5px;top:355.3px;width:66.5px;height:20.2px;background:#f3f3f3;border:1px solid #e8e8e8;border-bottom:none"></div>
<span class="t" style="left:794.5px;top:358.5px;letter-spacing:-.3px">Volný text</span>
<div style="left:854px;top:355.3px;width:65px;height:20.2px;background:#f3f3f3;border:1px solid #e8e8e8;border-bottom:none"></div>
<span class="t" style="left:860px;top:358.5px;letter-spacing:-.3px">Vlastnosti</span>
<div style="left:918px;top:355.3px;width:49px;height:20.2px;background:#f3f3f3;border:1px solid #e8e8e8;border-bottom:none"></div>
<span class="t" style="left:923px;top:358.5px;letter-spacing:-.3px">Přílohy</span>
<div style="left:966px;top:355.3px;width:57px;height:20.2px;background:#f3f3f3;border:1px solid #e8e8e8;border-bottom:none"></div>
<span class="t" style="left:971.8px;top:358.5px;letter-spacing:-.3px">Zak.listy</span>
<div style="left:1022px;top:355.3px;width:75px;height:20.2px;background:#f3f3f3;border:1px solid #e8e8e8;border-bottom:none"></div>
<span class="t" style="left:1027.5px;top:358.5px;letter-spacing:-.3px">Podzakázky</span>
<div style="left:1142px;top:355.3px;width:55px;height:20.2px;background:#f3f3f3;border:1px solid #e8e8e8;border-bottom:none"></div>
<span class="t" style="left:1145.5px;top:358.5px;letter-spacing:-.3px">Ev.práce</span>
<div style="left:1193.5px;top:354.5px;width:14.5px;height:14px;background:#fdfdfd;border:1px solid #dcdcdc;border-radius:2px"></div>
<div style="left:1208px;top:354.5px;width:14.5px;height:14px;background:#fdfdfd;border:1px solid #dcdcdc;border-radius:2px"></div>
<svg style="left:1193px;top:354px" width="30" height="15"><path d="M9.500 4.500v5l-3.200-2.500z" fill="#111"/><path d="M21 4.500v5l3.200-2.500z" fill="#111"/></svg>
<div style="left:651px;top:375px;width:572px;height:392.5px;background:#f7f7f7;border:1px solid #e6e6e6"></div>
<div style="left:654px;top:376px;width:566px;height:374px;background:#fff;border-left:1px solid #e0e0e0"></div>
<div style="left:1220px;top:376px;width:2px;height:389px;background:#ececec"></div>
<div style="left:1096px;top:353.5px;width:46.5px;height:23px;background:#f9f9f9;border:1px solid #e3e3e3;border-bottom:none"></div>
<span class="t" style="left:1103px;top:357px;font-weight:bold;letter-spacing:-.1px">Vazby</span>
<div style="left:655px;top:377.5px;width:565px;height:15px;background:linear-gradient(#ffffff 0%,#f4f6f9 45%,#d3dce7 100%)"></div>
<div style="left:786px;top:377.5px;width:1px;height:15px;background:#e3e8ee"></div>
<div style="left:885px;top:377.5px;width:1px;height:15px;background:#e3e8ee"></div>
<div style="left:1090.5px;top:377.5px;width:1px;height:15px;background:#e3e8ee"></div>
<div style="left:1171.3px;top:377.5px;width:1px;height:15px;background:#e3e8ee"></div>
<span class="t" style="left:655.5px;top:378.8px;color:#777;letter-spacing:-0.3px">Oblast / vazba z</span>
<span class="t" style="left:789.3px;top:378.8px;color:#777;letter-spacing:-0.33px">Doklad /podokl.(pol.)</span>
<span class="t" style="left:886.3px;top:378.8px;color:#777;letter-spacing:-0.42px">Název dokladu / položky</span>
<span class="t" style="left:1094.3px;top:378.8px;color:#777;letter-spacing:-0.36px">Datum dokl./pol.</span>
<span class="t" style="left:1175px;top:378.8px;color:#777;letter-spacing:-0.42px">Částka do</span>
<div style="left:655px;top:393.0px;width:565px;height:17px;background:#a8c8ee"></div>
<div style="left:786px;top:393.0px;width:1px;height:17px;background:rgba(255,255,255,.45)"></div>
<div style="left:885px;top:393.0px;width:1px;height:17px;background:rgba(255,255,255,.45)"></div>
<div style="left:1090.5px;top:393.0px;width:1px;height:17px;background:rgba(255,255,255,.45)"></div>
<div style="left:1171.3px;top:393.0px;width:1px;height:17px;background:rgba(255,255,255,.45)"></div>
<span class="t" style="left:686.4px;top:396.0px;letter-spacing:-.95px">ÚČTO</span>
<span class="g" style="left:787.8px;top:396.0px;letter-spacing:.25px">2025-230195</span>
<span class="g" style="left:887px;top:396.0px;letter-spacing:.25px">Moduly Evidence docházky,</span>
<span class="g" style="left:1091.500px;top:396.0px;width:80px;text-align:center;letter-spacing:.25px">25.7.2025</span>
<div style="left:655px;top:410.85px;width:565px;height:17px;background:#bcdcf5"></div>
<div style="left:786px;top:410.85px;width:1px;height:17px;background:rgba(255,255,255,.45)"></div>
<div style="left:885px;top:410.85px;width:1px;height:17px;background:rgba(255,255,255,.45)"></div>
<div style="left:1090.5px;top:410.85px;width:1px;height:17px;background:rgba(255,255,255,.45)"></div>
<div style="left:1171.3px;top:410.85px;width:1px;height:17px;background:rgba(255,255,255,.45)"></div>
<span class="g" style="left:712.5px;top:413.85px;letter-spacing:.25px">Zaklíčování</span>
<span class="g" style="left:787.8px;top:413.85px;letter-spacing:.25px">1</span>
<span class="g" style="left:887px;top:413.85px;letter-spacing:.25px">Moduly Evidence docházky,</span>
<span class="g" style="left:1091.500px;top:413.85px;width:80px;text-align:center;letter-spacing:.25px">5.8.2025</span>
<div style="left:655px;top:428.7px;width:565px;height:17px;background:#e0b6e8"></div>
<div style="left:786px;top:428.7px;width:1px;height:17px;background:rgba(255,255,255,.45)"></div>
<div style="left:885px;top:428.7px;width:1px;height:17px;background:rgba(255,255,255,.45)"></div>
<div style="left:1090.5px;top:428.7px;width:1px;height:17px;background:rgba(255,255,255,.45)"></div>
<div style="left:1171.3px;top:428.7px;width:1px;height:17px;background:rgba(255,255,255,.45)"></div>
<span class="g" style="left:712.5px;top:431.7px;letter-spacing:.25px">Saldorozpis</span>
<span class="g" style="left:787.8px;top:431.7px;letter-spacing:.25px">1-1</span>
<span class="g" style="left:887px;top:431.7px;letter-spacing:.25px">Pořadí saldorozpisu:1</span>
<span class="g" style="left:1091.500px;top:431.7px;width:80px;text-align:center;letter-spacing:.25px">25.7.2025</span>
<div style="left:655px;top:446.55px;width:565px;height:17px;background:#a8c8ee"></div>
<div style="left:786px;top:446.55px;width:1px;height:17px;background:rgba(255,255,255,.45)"></div>
<div style="left:885px;top:446.55px;width:1px;height:17px;background:rgba(255,255,255,.45)"></div>
<div style="left:1090.5px;top:446.55px;width:1px;height:17px;background:rgba(255,255,255,.45)"></div>
<div style="left:1171.3px;top:446.55px;width:1px;height:17px;background:rgba(255,255,255,.45)"></div>
<span class="t" style="left:686.4px;top:449.55px;letter-spacing:-1.15px">FAKTURY</span>
<span class="g" style="left:787.8px;top:449.55px;letter-spacing:.25px">2025-230195</span>
<span class="g" style="left:890px;top:449.55px;letter-spacing:.25px">Moduly Evidence docházky,</span>
<span class="g" style="left:1091.500px;top:449.55px;width:80px;text-align:center;letter-spacing:.25px">25.7.2025</span>
<div style="left:655px;top:464.4px;width:565px;height:17px;background:#eaf2fc"></div>
<div style="left:786px;top:464.4px;width:1px;height:17px;background:rgba(255,255,255,.45)"></div>
<div style="left:885px;top:464.4px;width:1px;height:17px;background:rgba(255,255,255,.45)"></div>
<div style="left:1090.5px;top:464.4px;width:1px;height:17px;background:rgba(255,255,255,.45)"></div>
<div style="left:1171.3px;top:464.4px;width:1px;height:17px;background:rgba(255,255,255,.45)"></div>
<span class="g" style="left:712.5px;top:467.4px;letter-spacing:.25px">Faktura</span>
<span class="g" style="left:787.8px;top:467.4px;letter-spacing:.25px">2025-230195</span>
<span class="g" style="left:887px;top:467.4px;letter-spacing:.25px">Hlavička faktury</span>
<span class="g" style="left:1091.500px;top:467.4px;width:80px;text-align:center;letter-spacing:.25px">25.7.2025</span>
<div style="left:655px;top:482.25px;width:565px;height:17px;background:#fdfbdc"></div>
<div style="left:786px;top:482.25px;width:1px;height:17px;background:rgba(255,255,255,.45)"></div>
<div style="left:885px;top:482.25px;width:1px;height:17px;background:rgba(255,255,255,.45)"></div>
<div style="left:1090.5px;top:482.25px;width:1px;height:17px;background:rgba(255,255,255,.45)"></div>
<div style="left:1171.3px;top:482.25px;width:1px;height:17px;background:rgba(255,255,255,.45)"></div>
<span class="g" style="left:712.5px;top:485.25px;letter-spacing:.25px">Dodávka</span>
<span class="g" style="left:787.8px;top:485.25px;letter-spacing:.25px">I1296-1/01</span>
<span class="g" style="left:887px;top:485.25px;letter-spacing:.25px">Moduly Evidence docházky,</span>
<span class="g" style="left:1091.500px;top:485.25px;width:80px;text-align:center;letter-spacing:.25px">25.7.2025</span>
<div style="left:655px;top:410px;width:565px;height:1px;background:repeating-linear-gradient(90deg,#222 0 1px,transparent 1px 2px)"></div>
<div style="left:655px;top:428px;width:565px;height:1px;background:repeating-linear-gradient(90deg,#222 0 1px,transparent 1px 2px)"></div>
<svg style="left:655px;top:393px" width="60" height="110" viewBox="0 0 60 110"><g stroke="#8f8f8f" stroke-width="1" stroke-dasharray="1 1" fill="none" shape-rendering="crispEdges"><path d="M14.500 13v31.500M14.500 27.500h27.500M14.500 44.500h27.500"/><path d="M14.500 66.500v31.500M14.500 80.500h27.500M14.500 98h27.500"/></g><rect x="11" y="5.2" width="7.600" height="7.600" rx="1" fill="#f4f4f4" stroke="#a9a9a9" stroke-width="1"/><path d="M12.800 9.0h4" stroke="#222" stroke-width="1.300"/><rect x="11" y="58.7" width="7.600" height="7.600" rx="1" fill="#f4f4f4" stroke="#a9a9a9" stroke-width="1"/><path d="M12.800 62.5h4" stroke="#222" stroke-width="1.300"/></svg>
<div style="left:655px;top:750px;width:565px;height:15px;background:#f0f0f0"></div>
<div style="left:670px;top:756px;width:393px;height:2px;background:#8c8c8c;border-radius:1px"></div>
<div style="left:1229px;top:175px;width:1px;height:593px;background:#e2e2e2"></div>
<div style="left:1234px;top:175.5px;width:70px;height:45px;background:#f6f6f6;border:1px solid #dedede"></div>
<span class="t" style="left:1239.5px;top:189.8px;font-family:&quot;DejaVu Sans&quot;,sans-serif;font-weight:bold;font-size:14px;line-height:17px;color:#1b1848;letter-spacing:0;transform:scaleX(1.0);transform-origin:0 0">WinFAS</span>
<span class="t" style="left:1234px;top:224.500px;width:70px;text-align:center;font-family:&quot;DejaVu Serif&quot;,serif;font-weight:bold;font-size:10px;letter-spacing:-.3px">1500</span>
<div class="btn" style="left:1235px;top:255.7px;width:55.5px;height:19px;font-size:11px;line-height:19px;overflow:hidden;white-space:nowrap;">OK, vývoj</div>
<div class="btn" style="left:1292.5px;top:255.7px;width:10px;height:19px;"><svg style="left:0;top:0" width="8" height="17"><path d="M1.200 5.300h5.800l-2.900 6z" fill="#000"/></svg></div>
<div class="btn" style="left:1235px;top:280.2px;width:55.5px;height:19px;font-size:11px;line-height:19px;overflow:hidden;white-space:nowrap;">Speciality</div>
<div class="btn" style="left:1292.5px;top:280.2px;width:10px;height:19px;"><svg style="left:0;top:0" width="8" height="17"><path d="M1.200 5.300h5.800l-2.900 6z" fill="#000"/></svg></div>
<div class="btn" style="left:1235px;top:328.7px;width:55.5px;height:19px;font-size:11px;line-height:19px;overflow:hidden;white-space:nowrap;">Sestavy</div>
<div class="btn" style="left:1292.5px;top:328.7px;width:10px;height:19px;"><svg style="left:0;top:0" width="8" height="17"><path d="M1.200 5.300h5.800l-2.900 6z" fill="#000"/></svg></div>
<div class="btn" style="left:1235px;top:353.3px;width:55.5px;height:19px;font-size:11px;line-height:19px;overflow:hidden;white-space:nowrap;">Aplikace</div>
<div class="btn" style="left:1292.5px;top:353.3px;width:10px;height:19px;"><svg style="left:0;top:0" width="8" height="17"><path d="M1.200 5.300h5.800l-2.900 6z" fill="#000"/></svg></div>
<div class="btn" style="left:1235px;top:426.7px;width:55.5px;height:19px;font-size:11px;line-height:19px;overflow:hidden;white-space:nowrap;">Zakáz. listy</div>
<div class="btn" style="left:1292.5px;top:426.7px;width:10px;height:19px;"><svg style="left:0;top:0" width="8" height="17"><path d="M1.200 5.300h5.800l-2.900 6z" fill="#000"/></svg></div>
<div class="btn" style="left:1235px;top:451.0px;width:55.5px;height:19px;font-size:11px;line-height:19px;overflow:hidden;white-space:nowrap;">Přílohy</div>
<div class="btn" style="left:1292.5px;top:451.0px;width:10px;height:19px;"><svg style="left:0;top:0" width="8" height="17"><path d="M1.200 5.300h5.800l-2.900 6z" fill="#000"/></svg></div>
<div class="btn" style="left:1235px;top:475.4px;width:55.5px;height:19px;font-size:11px;line-height:19px;overflow:hidden;white-space:nowrap;text-indent:-3px;letter-spacing:-.45px;">Podmnožiny</div>
<div class="btn" style="left:1292.5px;top:475.4px;width:10px;height:19px;"><svg style="left:0;top:0" width="8" height="17"><path d="M1.200 5.300h5.800l-2.900 6z" fill="#000"/></svg></div>
<div class="btn" style="left:1235px;top:562.0px;width:67.5px;height:19px;font-size:11px;line-height:19px">Přidej<div style="left:1.500px;top:1.500px;width:3px;height:15px;background:#4a9a3c"></div><div style="right:1.500px;top:1.500px;width:3px;height:15px;background:#4a9a3c"></div></div>
<div class="btn" style="left:1235px;top:586.5px;width:67.5px;height:19px;font-size:11px;line-height:19px">Kopíruj</div>
<div class="btn" style="left:1235px;top:611.0px;width:55.5px;height:19px;font-size:11px;line-height:19px">Uprav<div style="left:1.500px;top:1.500px;width:3px;height:15px;background:#e8b923"></div><div style="right:1.500px;top:1.500px;width:3px;height:15px;background:#e8b923"></div></div>
<div class="btn" style="left:1292.5px;top:611.2px;width:10px;height:19px;"><svg style="left:0;top:0" width="8" height="17"><path d="M1.200 5.300h5.800l-2.900 6z" fill="#000"/></svg></div>
<div class="btn" style="left:1235px;top:635.5px;width:67.5px;height:19px;font-size:11px;line-height:19px">Zobraz<div style="left:1.500px;top:1.500px;width:3px;height:15px;background:#2f6fd6"></div><div style="right:1.500px;top:1.500px;width:3px;height:15px;background:#2f6fd6"></div></div>
<div class="btn" style="left:1235px;top:660.0px;width:67.5px;height:19px;font-size:11px;line-height:19px">Smaž<div style="left:1.500px;top:1.500px;width:3px;height:15px;background:#e03a3a"></div><div style="right:1.500px;top:1.500px;width:3px;height:15px;background:#e03a3a"></div></div>
<div class="btn" style="left:1235px;top:698.0px;width:67.5px;height:19px;font-size:11px;line-height:19px">Konec</div>
<div class="btn" style="left:1235px;top:722.5px;width:67.5px;height:19px;font-size:11px;line-height:19px">Odlož</div>
<div class="btn" style="left:1235px;top:747.0px;width:67.5px;height:19px;font-size:11px;line-height:19px">Nápověda</div>
</div></div>
</body></html>
